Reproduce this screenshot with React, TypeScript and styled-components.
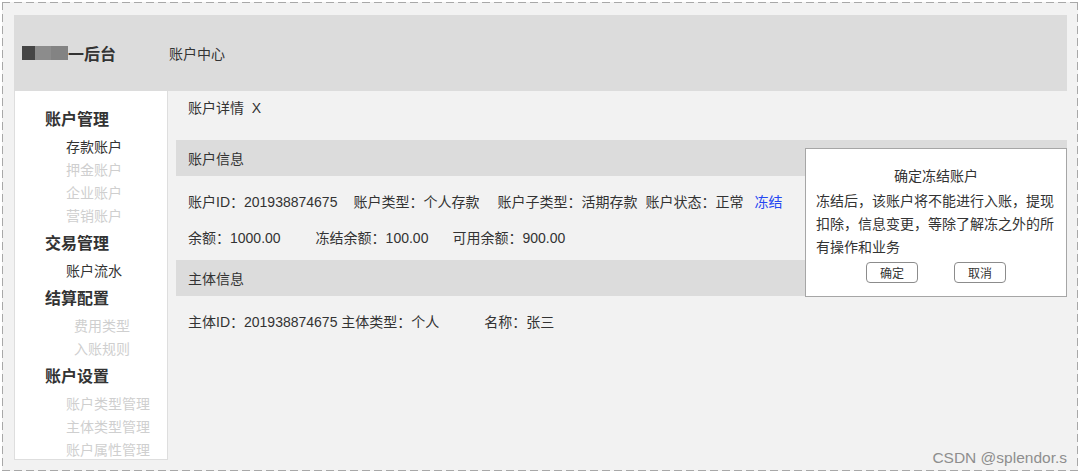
import React from 'react';
import styled, { createGlobalStyle } from 'styled-components';

const FONT = `"Liberation Sans", "Noto Sans CJK SC", sans-serif`;
const TEXT = '#333';
const BAND = '#dcdcdc';
const PAGE_BG = '#f2f2f2';
const DASH = '#a8a8a8';

const GlobalStyle = createGlobalStyle`
  html, body {
    margin: 0;
    padding: 0;
    background: #fff;
    font-family: ${FONT};
    color: ${TEXT};
  }
`;

// dashed frame drawn with gradients so the dash length matches the mockup
const hDash = `repeating-linear-gradient(90deg, ${DASH} 0 8px, transparent 8px 12px)`;
const vDash = `repeating-linear-gradient(180deg, ${DASH} 0 8px, transparent 8px 12px)`;

const Frame = styled.div`
  position: relative;
  box-sizing: border-box;
  margin: 2px 0 0 2px;
  width: 1076px;
  height: 469px;
  padding: 13px 11px 11px 12px;
  display: flex;
  flex-direction: column;
  background:
    ${hDash} top left / 100% 1px no-repeat,
    ${hDash} bottom left / 100% 1px no-repeat,
    ${vDash} top left / 1px 100% no-repeat,
    ${vDash} top right / 1px 100% no-repeat,
    ${PAGE_BG};
`;

const Header = styled.header`
  height: 76px;
  flex: none;
  background: ${BAND};
  display: flex;
  align-items: center;
  padding-left: 8px;
`;

const Brand = styled.div`
  display: flex;
  align-items: center;
  width: 147px;
  font-size: 16px;
  font-weight: bold;
  color: ${TEXT};
`;

const Blur = styled.span`
  display: inline-block;
  width: 46px;
  height: 14px;
  background: linear-gradient(90deg, #454545 0 13px, #8c8c8c 13px 29px, #838383 29px 46px);
  filter: blur(0.7px);
`;

const HeaderNav = styled.span`
  font-size: 14px;
  color: ${TEXT};
`;

const Body = styled.div`
  flex: 1;
  display: flex;
  min-height: 0;
`;

const Sidebar = styled.aside`
  box-sizing: border-box;
  width: 154px;
  flex: none;
  background: #fff;
  border: 1px solid #dedede;
  border-top: none;
  padding: 13px 0 0 30px;
  overflow: hidden;
`;

const GroupTitle = styled.div`
  height: 32px;
  line-height: 32px;
  font-size: 16px;
  font-weight: bold;
  color: ${TEXT};
  white-space: nowrap;
`;

const MenuItem = styled.div<{ $active?: boolean; $indent: number }>`
  height: 23px;
  line-height: 23px;
  font-size: 14px;
  padding-left: ${p => p.$indent}px;
  color: ${p => (p.$active ? TEXT : '#cfcfcf')};
  white-space: nowrap;
`;

const Main = styled.main`
  position: relative;
  flex: 1;
  padding-left: 8px;
`;

const TabRow = styled.div`
  height: 49px;
  padding: 7px 0 0 12px;
  box-sizing: border-box;
  font-size: 14px;
  line-height: 20px;
`;

const SectionBar = styled.div`
  height: 36px;
  background: ${BAND};
  display: flex;
  align-items: center;
  padding-left: 12px;
  font-size: 14px;
`;

const InfoBlock = styled.div<{ $bottom: number }>`
  padding: 16px 0 ${p => p.$bottom}px 12px;
  display: flex;
  flex-direction: column;
  gap: 16px;
`;

const InfoRow = styled.div`
  display: flex;
  height: 20px;
  line-height: 20px;
  font-size: 14px;
  white-space: nowrap;
`;

const Field = styled.span<{ $gap?: number }>`
  margin-left: ${p => p.$gap ?? 0}px;
`;

const ActionLink = styled.span<{ $gap: number }>`
  margin-left: ${p => p.$gap}px;
  color: #2447f2;
  cursor: pointer;
`;

const Dialog = styled.div`
  position: absolute;
  top: 57px;
  right: 0;
  box-sizing: border-box;
  width: 262px;
  height: 149px;
  background: #fff;
  border: 1px solid #a6a6a6;
  padding: 17px 10px 0 10px;
  font-size: 14px;
`;

const DialogTitle = styled.div`
  text-align: center;
  line-height: 20px;
  margin-bottom: 4px;
`;

const DialogText = styled.div`
  line-height: 23px;
`;

const DialogActions = styled.div`
  display: flex;
  justify-content: center;
  gap: 36px;
  margin-top: 3px;
`;

const Button = styled.button`
  box-sizing: border-box;
  width: 52px;
  height: 21px;
  padding: 0;
  background: #fff;
  border: 1px solid #8c8c8c;
  border-radius: 4px;
  font-family: ${FONT};
  font-size: 12px;
  color: ${TEXT};
`;

const Watermark = styled.div`
  position: absolute;
  right: 11px;
  bottom: 4px;
  font-size: 15.5px;
  color: #8e8e8e;
  font-family: ${FONT};
`;

const menu: { title: string; items: { label: string; active?: boolean; indent?: number }[] }[] = [
  {
    title: '账户管理',
    items: [
      { label: '存款账户', active: true },
      { label: '押金账户' },
      { label: '企业账户' },
      { label: '营销账户' },
    ],
  },
  { title: '交易管理', items: [{ label: '账户流水', active: true }] },
  {
    title: '结算配置',
    items: [
      { label: '费用类型', indent: 29 },
      { label: '入账规则', indent: 29 },
    ],
  },
  {
    title: '账户设置',
    items: [{ label: '账户类型管理' }, { label: '主体类型管理' }, { label: '账户属性管理' }],
  },
];

export default function App() {
  return (
    <>
      <GlobalStyle />
      <Frame>
        <Header>
          <Brand>
            <Blur />
            一后台
          </Brand>
          <HeaderNav>账户中心</HeaderNav>
        </Header>
        <Body>
          <Sidebar>
            {menu.map(group => (
              <div key={group.title}>
                <GroupTitle>{group.title}</GroupTitle>
                {group.items.map(item => (
                  <MenuItem key={item.label} $active={item.active} $indent={item.indent ?? 21}>
                    {item.label}
                  </MenuItem>
                ))}
              </div>
            ))}
          </Sidebar>
          <Main>
            <TabRow>账户详情&nbsp;&nbsp;X</TabRow>
            <SectionBar>账户信息</SectionBar>
            <InfoBlock $bottom={12}>
              <InfoRow>
                <Field>账户ID：201938874675</Field>
                <Field $gap={16}>账户类型：个人存款</Field>
                <Field $gap={18}>账户子类型：活期存款</Field>
                <Field $gap={8}>账户状态：正常</Field>
                <ActionLink $gap={11}>冻结</ActionLink>
              </InfoRow>
              <InfoRow>
                <Field>余额：1000.00</Field>
                <Field $gap={35}>冻结余额：100.00</Field>
                <Field $gap={24}>可用余额：900.00</Field>
              </InfoRow>
            </InfoBlock>
            <SectionBar>主体信息</SectionBar>
            <InfoBlock $bottom={0}>
              <InfoRow>
                <Field>主体ID：201938874675 主体类型：个人</Field>
                <Field $gap={45}>名称：张三</Field>
              </InfoRow>
            </InfoBlock>
            <Dialog>
              <DialogTitle>确定冻结账户</DialogTitle>
              <DialogText>冻结后，该账户将不能进行入账，提现扣除，信息变更，等除了解冻之外的所有操作和业务</DialogText>
              <DialogActions>
                <Button>确定</Button>
                <Button>取消</Button>
              </DialogActions>
            </Dialog>
          </Main>
        </Body>
        <Watermark>CSDN @splendor.s</Watermark>
      </Frame>
    </>
  );
}
